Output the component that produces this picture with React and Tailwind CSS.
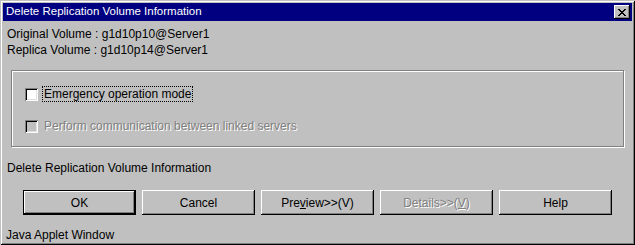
import React from "react";

const FONT = { fontFamily: '"Liberation Sans", Arial, sans-serif' };

const raised =
  "shadow-[inset_-1px_-1px_#000,inset_1px_1px_#fff,inset_-2px_-2px_#808080]";

function CloseBox() {
  return (
    <div className={`w-[16px] h-[14px] bg-[#c0c0c0] flex items-center justify-center ${raised}`}>
      <svg width="8" height="7" viewBox="0 0 8 7" shapeRendering="crispEdges">
        <path
          d="M0 0h2v1h-2zM6 0h2v1h-2zM1 1h2v1h-2zM5 1h2v1h-2zM2 2h4v1h-4zM3 3h2v1h-2zM2 4h4v1h-4zM1 5h2v1h-2zM5 5h2v1h-2zM0 6h2v1h-2zM6 6h2v1h-2z"
          fill="#000"
        />
      </svg>
    </div>
  );
}

function CheckBox({ label, disabled, focused }) {
  return (
    <div className="flex items-center h-[16px]">
      <div
        className={`w-[13px] h-[13px] shrink-0 ${disabled ? "bg-[#c0c0c0]" : "bg-white"} shadow-[inset_1px_1px_#808080,inset_-1px_-1px_#fff,inset_2px_2px_#000,inset_-2px_-2px_#dfdfdf]`}
      />
      <span
        className={`ml-[4px] px-[1px] leading-[14px] text-[12px] ${
          focused ? "border border-dotted border-black" : "border border-transparent"
        } ${disabled ? "text-[#808080] [text-shadow:1px_1px_0_#fff]" : "text-black"}`}
      >
        {label}
      </span>
    </div>
  );
}

function Button({ children, def, disabled }) {
  return (
    <div
      className={`w-[113px] h-[25px] flex items-center justify-center text-[12px] ${
        def ? "border border-black" : ""
      } ${raised} ${disabled ? "text-[#808080] [text-shadow:1px_1px_0_#fff]" : "text-black"}`}
    >
      {children}
    </div>
  );
}

export default function App() {
  return (
    <div
      className="w-[635px] h-[245px] bg-[#c0c0c0] p-[3px] flex flex-col text-black overflow-hidden shadow-[inset_1px_1px_#c0c0c0,inset_-1px_-1px_#000,inset_2px_2px_#fff,inset_-2px_-2px_#808080]"
      style={FONT}
    >
      <div className="h-[18px] shrink-0 bg-[#000080] flex items-center justify-between pl-[3px] pr-[2px]">
        <span className="text-white text-[11.5px] leading-none">Delete Replication Volume Information</span>
        <CloseBox />
      </div>

      <div className="pl-[4px] mt-[5px] text-[12px] leading-[16px]">
        <div>Original Volume : g1d10p10@Server1</div>
        <div>Replica Volume : g1d10p14@Server1</div>
      </div>

      <div className="mx-[8px] mt-[12px] h-[77px] shrink-0 border border-[#808080] shadow-[1px_1px_#fff,inset_1px_1px_#fff] pl-[13px] pt-[15px] flex flex-col gap-[16px]">
        <CheckBox label="Emergency operation mode" focused />
        <CheckBox label="Perform communication between linked servers" disabled />
      </div>

      <div className="pl-[4px] mt-[13px] text-[12px] leading-[16px]">Delete Replication Volume Information</div>

      <div className="flex gap-[6px] pl-[20px] mt-[14px] shrink-0">
        <Button def>OK</Button>
        <Button>Cancel</Button>
        <Button>
          Pre<span className="underline">v</span>iew&gt;&gt;(V)
        </Button>
        <Button disabled>
          Details&gt;&gt;(<span className="underline">V</span>)
        </Button>
        <Button>Help</Button>
      </div>

      <div className="pl-[3px] mt-[12px] text-[12px] leading-[16px] shrink-0">Java Applet Window</div>
    </div>
  );
}
